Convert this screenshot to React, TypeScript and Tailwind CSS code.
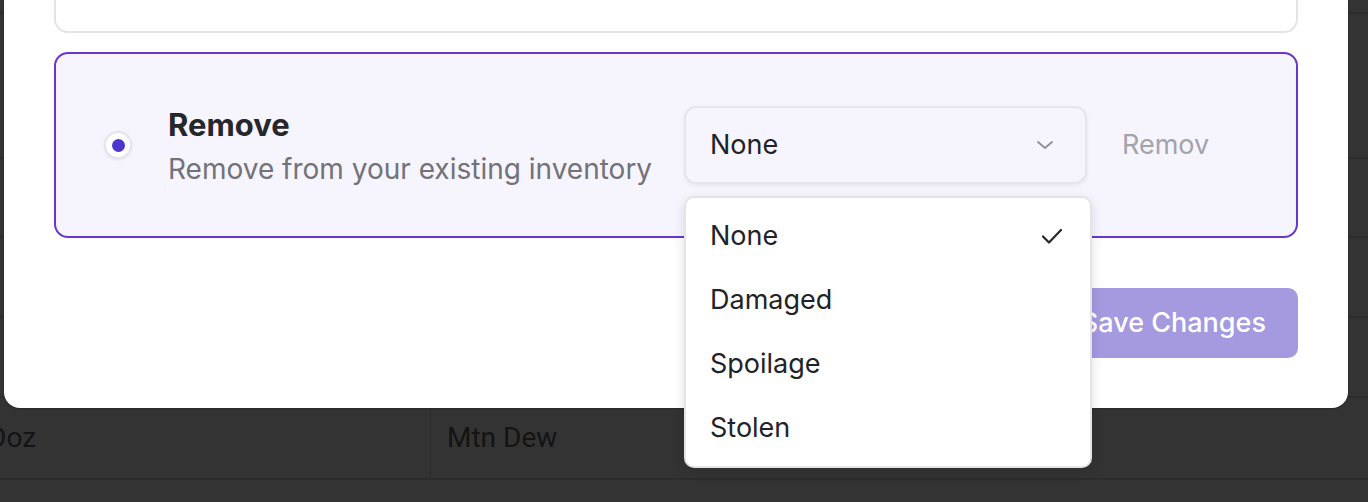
const options = ["None", "Damaged", "Spoilage", "Stolen"];

function Check() {
  return (
    <svg width="24" height="24" viewBox="0 0 24 24" fill="none" stroke="#27272a" strokeWidth="2.2" strokeLinecap="round" strokeLinejoin="round">
      <path d="M3 12.5l6 6L21 6" />
    </svg>
  );
}

function Chevron() {
  return (
    <svg width="20" height="20" viewBox="0 0 20 20" fill="none" stroke="#8e8e96" strokeWidth="1.8" strokeLinecap="round" strokeLinejoin="round">
      <path d="M3 7l7 6 7-6" />
    </svg>
  );
}

export default function App() {
  return (
    <div className="relative h-[502px] w-[1368px] overflow-hidden bg-[#333333] font-['Inter',sans-serif]">
      {/* table behind the dialog */}
      <div className="flex flex-col">
        <div className="h-[14px] border-b-2 border-[#2c2c2c]" />
        <div className="h-[145px] border-b-2 border-[#2c2c2c]" />
        <div className="h-[79px] border-b-2 border-[#2c2c2c]" />
        <div className="h-[80px] border-b-2 border-[#2c2c2c]" />
        <div className="h-[80px] border-b-2 border-[#2c2c2c]" />
        <div className="grid h-[82px] grid-cols-[431px_1fr] border-b-2 border-[#2c2c2c] font-['Roboto',sans-serif] text-[28px] text-[#141414]">
          <div className="flex items-center overflow-hidden border-r border-[#2c2c2c]">
            <span className="-ml-[12px] whitespace-nowrap">Doz</span>
          </div>
          <div className="flex items-center pl-[16px]">Mtn Dew</div>
        </div>
      </div>

      {/* dialog */}
      <div className="absolute left-[4px] top-[-40px] flex w-[1344px] flex-col rounded-b-[16px] bg-white px-[50px] pb-[50px] shadow-[0_1px_2px_rgba(0,0,0,0.2)]">
        <div className="h-[73px] rounded-b-[14px] border-2 border-t-0 border-[#e4e4e7]" />

        <div className="mt-[19px] flex h-[186px] items-center rounded-[14px] border-2 border-[#6a36cc] bg-[#f6f4fc] pl-[48px]">
          <div className="flex h-[28px] w-[28px] items-center justify-center rounded-full border-2 border-[#e6e4ec] bg-white shadow-[0_1px_3px_rgba(0,0,0,0.08)]">
            <div className="h-[13px] w-[13px] rounded-full bg-[#4f35d0]" />
          </div>

          <div className="ml-[36px] flex w-[516px] flex-col gap-[4px] pt-[4px]">
            <div className="text-[31px] font-bold leading-[40px] text-[#26262b]">Remove</div>
            <div className="whitespace-nowrap text-[28px] leading-[40px] text-[#72727a]">Remove from your existing inventory</div>
          </div>

          <div className="relative">
            <div className="flex h-[78px] w-[403px] items-center justify-between rounded-[12px] border-2 border-[#e6e4ec] bg-[#f6f4fc] pl-[24px] pr-[30px] shadow-[0_2px_4px_rgba(0,0,0,0.06)]">
              <span className="text-[27px] text-[#222226]">None</span>
              <Chevron />
            </div>

            <div className="absolute left-0 top-[90px] z-10 w-[408px] rounded-[10px] border-2 border-[#e4e4e7] bg-white py-[6px] shadow-[0_4px_12px_rgba(0,0,0,0.12)]">
              {options.map((o) => (
                <div key={o} className="flex h-[64px] items-center justify-between pl-[24px] pr-[26px] text-[27px] text-[#232327]">
                  <span>{o}</span>
                  {o === "None" && <Check />}
                </div>
              ))}
            </div>
          </div>

          <div className="ml-[35px] w-[88px] overflow-hidden whitespace-nowrap text-[27px] text-[#a3a3aa]">
            Remov
          </div>
        </div>

        <div className="mt-[50px] flex justify-end">
          <button className="flex h-[70px] items-center rounded-[10px] bg-[#a599e0] px-[32px] text-[27px] font-medium text-white">
            Save Changes
          </button>
        </div>
      </div>
    </div>
  );
}
